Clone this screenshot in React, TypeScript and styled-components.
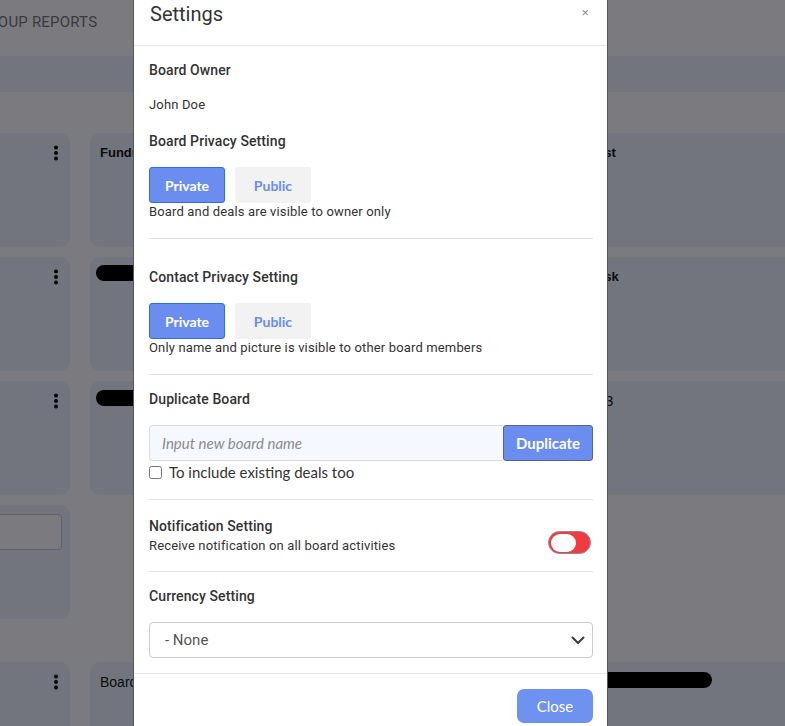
import React from "react";
import styled, { createGlobalStyle } from "styled-components";

const Global = createGlobalStyle`
  html, body { margin: 0; padding: 0; }
  body { font-family: Roboto, "Liberation Sans", Arial, sans-serif; overflow: hidden; }
  * { box-sizing: border-box; }
`;

const Page = styled.div`
  position: relative;
  width: 785px;
  height: 726px;
  overflow: hidden;
  background: #7b7b7f;
`;

const TopBar = styled.div`
  height: 56px;
  display: flex;
  align-items: flex-start;
  padding-top: 14px;
`;

const NavTab = styled.span`
  margin-left: -22px;
  font-family: Roboto, "Liberation Sans", sans-serif;
  font-size: 15px;
  line-height: 17px;
  color: #3a3a3c;
  letter-spacing: 0.2px;
`;

const SubBar = styled.div`
  height: 36px;
  background: #72757d;
`;

const Board = styled.div<{ $top: number }>`
  margin-top: ${(p) => p.$top}px;
  margin-left: -155px;
  display: grid;
  grid-template-columns: repeat(4, 225px);
  grid-auto-rows: 114px;
  column-gap: 20px;
  row-gap: 10px;
`;

const Card = styled.div<{ $empty?: boolean }>`
  border-radius: 10px;
  background: ${(p) => (p.$empty ? "transparent" : "#72757d")};
  padding: 12px 11px 0 10px;
  display: flex;
  align-items: flex-start;
  justify-content: space-between;
`;

const CardTitle = styled.span<{ $bold?: boolean }>`
  font-family: Arial, "Liberation Sans", sans-serif;
  font-size: ${(p) => (p.$bold ? 13 : 14)}px;
  font-weight: ${(p) => (p.$bold ? 700 : 400)};
  color: #0c0c10;
  line-height: 16px;
`;

const Redacted = styled.span<{ $w: number; $top: number }>`
  display: block;
  width: ${(p) => p.$w}px;
  height: 16px;
  margin: ${(p) => p.$top - 12}px 0 0 -4px;
  border-radius: 8px;
  background: #000;
`;

const CardInput = styled.div`
  flex: 1;
  margin: -3px -3px 0 0;
  height: 36px;
  border: 1px solid #606166;
  border-radius: 4px;
  background: #7b7b7f;
`;

const Kebab = () => (
  <svg width="6" height="16" viewBox="0 0 6 16" style={{ marginLeft: "auto" }}>
    <circle cx="3" cy="2.5" r="2" fill="#000" />
    <circle cx="3" cy="8" r="2" fill="#000" />
    <circle cx="3" cy="13.5" r="2" fill="#000" />
  </svg>
);

/* ---------- modal ---------- */

const Modal = styled.div`
  position: absolute;
  left: 133px;
  top: -13px;
  width: 475px;
  height: 760px;
  background: #fff;
  border-left: 1px solid #55565b;
  border-right: 1px solid #55565b;
  display: flex;
  flex-direction: column;
`;

const Header = styled.div`
  display: flex;
  justify-content: space-between;
  align-items: flex-start;
  padding: 13px 15px 17px 16px;
  border-bottom: 1px solid #e5e5e5;
`;

const Title = styled.h4`
  margin: 0;
  font-family: Roboto, "Liberation Sans", sans-serif;
  font-size: 20px;
  font-weight: 400;
  line-height: 28px;
  color: #333;
`;

const CloseX = styled.span`
  font-family: Arial, "Liberation Sans", sans-serif;
  font-size: 13px;
  line-height: 14px;
  color: #8a8a8a;
  margin-top: 6px;
  margin-right: 3px;
`;

const Body = styled.div`
  padding: 15px 14px 15px 15px;
  display: flex;
  flex-direction: column;
`;

const Label = styled.div<{ $mt?: number }>`
  margin-top: ${(p) => p.$mt ?? 0}px;
  font-family: Roboto, "Liberation Sans", sans-serif;
  font-size: 14px;
  font-weight: 500;
  line-height: 18px;
  color: #333;
  letter-spacing: 0.1px;
`;

const Text = styled.div<{ $mt?: number }>`
  margin-top: ${(p) => p.$mt ?? 0}px;
  font-family: Roboto, "Liberation Sans", sans-serif;
  font-size: 13px;
  line-height: 18px;
  color: #333;
  letter-spacing: 0.15px;
`;

const Divider = styled.hr<{ $mt: number; $mb: number }>`
  border: 0;
  border-top: 1px solid #e3e3e3;
  margin: ${(p) => p.$mt}px 0 ${(p) => p.$mb}px;
`;

const ToggleGroup = styled.div`
  display: flex;
  gap: 10px;
  margin-top: 17px;
`;

const SegButton = styled.button<{ $active?: boolean }>`
  width: 76px;
  height: 36px;
  border-radius: 3px;
  border: 1px solid ${(p) => (p.$active ? "#2a6fe6" : "#f2f2f2")};
  background: ${(p) => (p.$active ? "#6a8def" : "#f2f2f2")};
  color: ${(p) => (p.$active ? "#fff" : "#6a8def")};
  font-family: Lato, "Open Sans", sans-serif;
  font-weight: 700;
  font-size: 14px;
  padding: 0;
`;

const DupRow = styled.div`
  display: flex;
  margin-top: 17px;
  height: 36px;
`;

const DupInput = styled.input`
  flex: 1;
  min-width: 0;
  height: 36px;
  border: 1px solid #d8dbe2;
  border-right: 0;
  border-radius: 4px 0 0 4px;
  background: #f5f8fe;
  padding: 0 12px;
  font-family: Lato, "Open Sans", sans-serif;
  font-size: 15px;
  color: #333;
  outline: none;
  &::placeholder {
    color: #8b8b8b;
    font-style: italic;
  }
`;

const DupButton = styled.button`
  width: 90px;
  height: 36px;
  border: 1px solid #5a6480;
  border-radius: 3px;
  background: #6a8def;
  color: #fff;
  font-family: Lato, "Open Sans", sans-serif;
  font-weight: 700;
  font-size: 15px;
  padding: 0;
`;

const CheckRow = styled.label`
  display: flex;
  align-items: center;
  gap: 7px;
  margin-top: 2px;
  height: 18px;
  font-family: Lato, "Open Sans", sans-serif;
  font-size: 15px;
  color: #333;
  input {
    margin: 0;
    width: 13px;
    height: 13px;
  }
`;

const NotifRow = styled.div`
  display: flex;
  justify-content: space-between;
  align-items: flex-end;
`;

const NotifText = styled.div`
  display: flex;
  flex-direction: column;
  gap: 2px;
`;

const Switch = styled.span`
  width: 43px;
  height: 23px;
  border-radius: 12px;
  background: #f23b3f;
  border: 1px solid #8d8f96;
  display: flex;
  align-items: center;
  padding: 0 2px;
  margin: 0 2px 1px 0;
`;

const Knob = styled.span`
  width: 25px;
  height: 18px;
  border-radius: 9px;
  background: #fff;
`;

const SelectBox = styled.div`
  margin-top: 17px;
  height: 36px;
  border: 1px solid #cdcdcd;
  border-radius: 4px;
  display: flex;
  align-items: center;
  justify-content: space-between;
  padding: 0 6px 0 15px;
  font-family: Roboto, "Liberation Sans", sans-serif;
  font-size: 15px;
  color: #555;
`;

const Footer = styled.div`
  border-top: 1px solid #e5e5e5;
  padding: 15px 14px 0 15px;
  display: flex;
  justify-content: flex-end;
`;

const CloseButton = styled.button`
  width: 76px;
  height: 34px;
  border: 0;
  border-radius: 7px;
  background: #6f91ef;
  color: #fff;
  font-family: Lato, "Open Sans", sans-serif;
  font-size: 15px;
  padding: 0;
`;

type CardSpec =
  | { kind: "kebab" }
  | { kind: "title"; text: string; bold?: boolean }
  | { kind: "pill"; w: number; top: number }
  | { kind: "input" }
  | { kind: "plain" }
  | { kind: "empty" };

const group1: CardSpec[] = [
  { kind: "kebab" }, { kind: "title", text: "Fundraising", bold: true }, { kind: "plain" }, { kind: "title", text: "Test", bold: true },
  { kind: "kebab" }, { kind: "pill", w: 120, top: 8 }, { kind: "plain" }, { kind: "title", text: "Task", bold: true },
  { kind: "kebab" }, { kind: "pill", w: 120, top: 9 }, { kind: "plain" }, { kind: "title", text: "123" },
  { kind: "input" }, { kind: "empty" }, { kind: "empty" }, { kind: "empty" },
];

const group2: CardSpec[] = [
  { kind: "kebab" }, { kind: "title", text: "Board" }, { kind: "plain" }, { kind: "pill", w: 126, top: 10 },
];

const renderCard = (c: CardSpec, i: number) => {
  switch (c.kind) {
    case "kebab":
      return <Card key={i}><Kebab /></Card>;
    case "title":
      return <Card key={i}><CardTitle $bold={c.bold}>{c.text}</CardTitle></Card>;
    case "pill":
      return <Card key={i}><Redacted $w={c.w} $top={c.top} /></Card>;
    case "input":
      return <Card key={i}><CardInput /></Card>;
    case "plain":
      return <Card key={i} />;
    default:
      return <Card key={i} $empty />;
  }
};

const Chevron = () => (
  <svg width="16" height="16" viewBox="0 0 16 16">
    <path d="M2.5 5.5 L8 11 L13.5 5.5" fill="none" stroke="#343a40" strokeWidth="2" strokeLinecap="round" strokeLinejoin="round" />
  </svg>
);

export default function App() {
  return (
    <Page>
      <Global />
      <TopBar>
        <NavTab>GROUP REPORTS</NavTab>
      </TopBar>
      <SubBar />
      <Board $top={41}>{group1.map(renderCard)}</Board>
      <Board $top={43}>{group2.map(renderCard)}</Board>

      <Modal>
        <Header>
          <Title>Settings</Title>
          <CloseX>×</CloseX>
        </Header>
        <Body>
          <Label>Board Owner</Label>
          <Text $mt={17}>John Doe</Text>
          <Label $mt={18}>Board Privacy Setting</Label>
          <ToggleGroup>
            <SegButton $active>Private</SegButton>
            <SegButton>Public</SegButton>
          </ToggleGroup>
          <Text>Board and deals are visible to owner only</Text>
          <Divider $mt={17} $mb={29} />
          <Label>Contact Privacy Setting</Label>
          <ToggleGroup>
            <SegButton $active>Private</SegButton>
            <SegButton>Public</SegButton>
          </ToggleGroup>
          <Text>Only name and picture is visible to other board members</Text>
          <Divider $mt={17} $mb={15} />
          <Label>Duplicate Board</Label>
          <DupRow>
            <DupInput placeholder="Input new board name" />
            <DupButton>Duplicate</DupButton>
          </DupRow>
          <CheckRow>
            <input type="checkbox" />
            To include existing deals too
          </CheckRow>
          <Divider $mt={18} $mb={17} />
          <NotifRow>
            <NotifText>
              <Label>Notification Setting</Label>
              <Text>Receive notification on all board activities</Text>
            </NotifText>
            <Switch>
              <Knob />
            </Switch>
          </NotifRow>
          <Divider $mt={16} $mb={15} />
          <Label>Currency Setting</Label>
          <SelectBox>
            <span>- None</span>
            <Chevron />
          </SelectBox>
        </Body>
        <Footer>
          <CloseButton>Close</CloseButton>
        </Footer>
      </Modal>
    </Page>
  );
}
